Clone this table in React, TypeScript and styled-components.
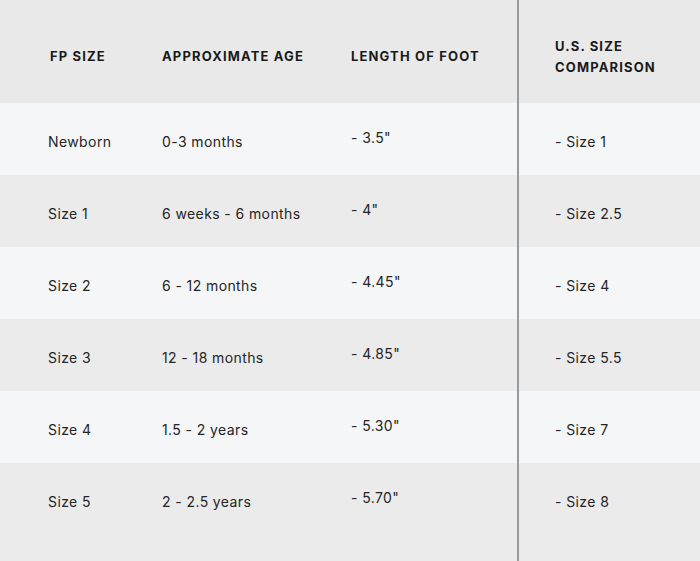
import React from "react";
import styled, { createGlobalStyle } from "styled-components";

const Global = createGlobalStyle`
  html, body { margin: 0; padding: 0; background: #ebebeb; }
  body { font-family: Inter, "Noto Sans", sans-serif; color: #222; }
  * { box-sizing: border-box; }
`;

const Table = styled.div`
  width: 700px;
  height: 561px;
  display: flex;
  flex-direction: column;
  overflow: hidden;
`;

const Row = styled.div<{ $bg: string; $h: number }>`
  display: grid;
  grid-template-columns: 162px 189px 166px 1fr;
  height: ${(p) => p.$h}px;
  flex: 0 0 auto;
  background: ${(p) => p.$bg};
`;

const LastRow = styled(Row)`
  flex: 1 1 auto;
`;

const Cell = styled.div<{ $first?: boolean; $divider?: boolean; $top: number }>`
  padding-left: ${(p) => (p.$first ? 48 : p.$divider ? 36 : 0)}px;
  padding-top: ${(p) => p.$top}px;
  border-left: ${(p) => (p.$divider ? "2px solid #9a9a9a" : "none")};
  font-size: 14px;
  line-height: 20px;
  letter-spacing: 0.4px;
  color: #252525;
`;

const HeadCell = styled.div<{ $first?: boolean; $divider?: boolean; $top: number }>`
  padding-left: ${(p) => (p.$first ? 50 : p.$divider ? 36 : 0)}px;
  padding-top: ${(p) => p.$top}px;
  border-left: ${(p) => (p.$divider ? "2px solid #9a9a9a" : "none")};
  font-size: 13px;
  font-weight: 700;
  line-height: 21px;
  letter-spacing: 1.15px;
  text-transform: uppercase;
  color: #1a1a1a;
`;

const rows = [
  ["Newborn", "0-3 months", '- 3.5"', "- Size 1"],
  ["Size 1", "6 weeks - 6 months", '- 4"', "- Size 2.5"],
  ["Size 2", "6 - 12 months", '- 4.45"', "- Size 4"],
  ["Size 3", "12 - 18 months", '- 4.85"', "- Size 5.5"],
  ["Size 4", "1.5 - 2 years", '- 5.30"', "- Size 7"],
  ["Size 5", "2 - 2.5 years", '- 5.70"', "- Size 8"],
];

const LIGHT = "#f5f6f7";
const DARK = "#ebebeb";

function Cells({ r }: { r: string[] }) {
  return (
    <>
      <Cell $first $top={29}>{r[0]}</Cell>
      <Cell $top={29}>{r[1]}</Cell>
      <Cell $top={25}>{r[2]}</Cell>
      <Cell $divider $top={29}>{r[3]}</Cell>
    </>
  );
}

export default function App() {
  return (
    <>
      <Global />
      <Table>
        <Row $bg="#e9e9e9" $h={103}>
          <HeadCell $first $top={46}>FP Size</HeadCell>
          <HeadCell $top={46}>Approximate Age</HeadCell>
          <HeadCell $top={46}>Length of Foot</HeadCell>
          <HeadCell $divider $top={36}>
            U.S. Size
            <br />
            Comparison
          </HeadCell>
        </Row>
        {rows.slice(0, 5).map((r, i) => (
          <Row key={r[0]} $bg={i % 2 === 0 ? LIGHT : DARK} $h={72}>
            <Cells r={r} />
          </Row>
        ))}
        <LastRow $bg={DARK} $h={98}>
          <Cells r={rows[5]} />
        </LastRow>
      </Table>
    </>
  );
}
